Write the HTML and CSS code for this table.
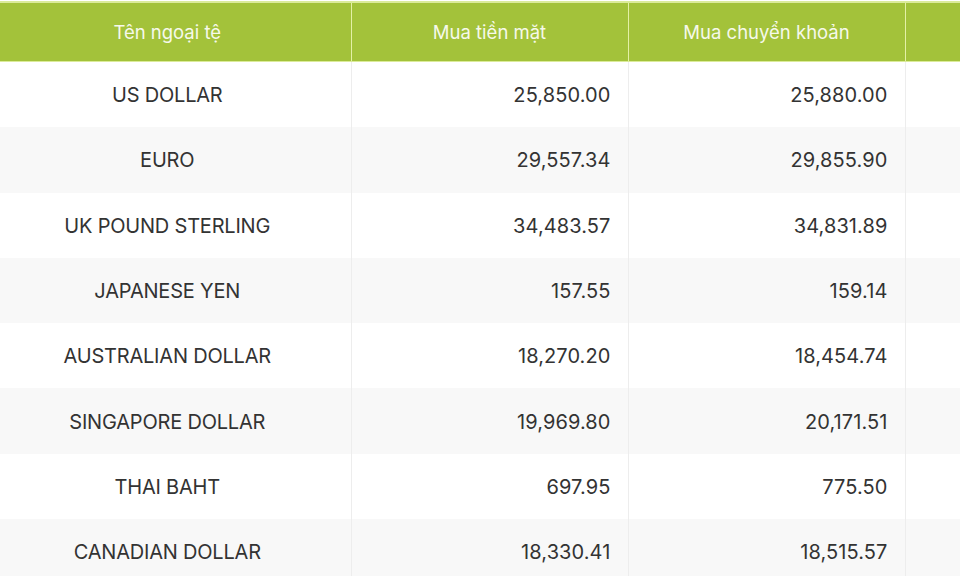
FILE: index.html
```html
<!DOCTYPE html>
<html lang="vi">
<head>
<meta charset="utf-8">
<title>Tỷ giá ngoại tệ</title>
<link rel="stylesheet" href="styles.css">
</head>
<body>
<div class="wrap">
<table class="rates">
  <colgroup>
    <col class="c-name"><col class="c-num"><col class="c-num"><col class="c-num">
  </colgroup>
  <thead>
    <tr>
      <th class="name">Tên ngoại tệ</th>
      <th>Mua tiền mặt</th>
      <th>Mua chuyển khoản</th>
      <th></th>
    </tr>
  </thead>
  <tbody>
    <tr><td class="name">US DOLLAR</td><td class="num">25,850.00</td><td class="num">25,880.00</td><td class="num"></td></tr>
    <tr><td class="name">EURO</td><td class="num">29,557.34</td><td class="num">29,855.90</td><td class="num"></td></tr>
    <tr><td class="name">UK POUND STERLING</td><td class="num">34,483.57</td><td class="num">34,831.89</td><td class="num"></td></tr>
    <tr><td class="name">JAPANESE YEN</td><td class="num">157.55</td><td class="num">159.14</td><td class="num"></td></tr>
    <tr><td class="name">AUSTRALIAN DOLLAR</td><td class="num">18,270.20</td><td class="num">18,454.74</td><td class="num"></td></tr>
    <tr><td class="name">SINGAPORE DOLLAR</td><td class="num">19,969.80</td><td class="num">20,171.51</td><td class="num"></td></tr>
    <tr><td class="name">THAI BAHT</td><td class="num">697.95</td><td class="num">775.50</td><td class="num"></td></tr>
    <tr><td class="name">CANADIAN DOLLAR</td><td class="num">18,330.41</td><td class="num">18,515.57</td><td class="num"></td></tr>
  </tbody>
</table>
</div>
</body>
</html>
```

FILE: styles.css
```css
html, body {
  margin: 0;
  padding: 0;
  background: #ffffff;
  overflow: hidden;
}
.wrap {
  width: 960px;
  height: 576px;
  overflow: hidden;
  padding-top: 1px;
  box-sizing: border-box;
}
.rates {
  border-collapse: collapse;
  table-layout: fixed;
  width: 1182px;
  font-family: Inter, "Liberation Sans", Arial, sans-serif;
}
.c-name { width: 351px; }
.c-num { width: 277px; }
.rates thead th {
  background: #a3c23a;
  color: #f6f9ea;
  font-weight: 400;
  font-size: 18.5px;
  letter-spacing: 0;
  height: 58px;
  padding: 0;
  text-align: center;
  vertical-align: middle;
  white-space: nowrap;
  border-top: 2px solid #dbeb9a;
  border-bottom: 1px solid #dbeb9a;
  border-left: 1px solid #e4f0a6;
  border-right: 1px solid #e4f0a6;
}
.rates thead th:first-child { border-left: none; }
.rates tbody td {
  height: 64.3px;
  padding: 1px 0 0 0;
  font-size: 20px;
  color: #333333;
  vertical-align: middle;
  border-left: 1px solid #ededed;
  border-right: 1px solid #ededed;
}
.rates tbody td:first-child { border-left: none; }
.rates tbody tr:nth-child(even) td { background: #f8f8f8; }
.rates .name {
  text-align: center;
  padding-right: 16px;
}
.rates tbody .name { letter-spacing: -0.2px; }
.rates .num {
  text-align: right;
  padding-right: 17px;
  letter-spacing: 0.1px;
}
```
